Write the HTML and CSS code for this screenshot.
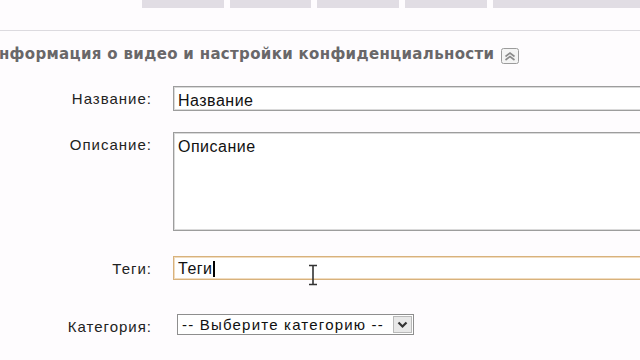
FILE: index.html
```html
<!DOCTYPE html>
<html lang="ru">
<head>
<meta charset="utf-8">
<title>Информация о видео</title>
<link rel="stylesheet" href="styles.css">
</head>
<body>
<div class="page">
  <div class="tabs">
    <span class="tab"></span>
    <span class="tab"></span>
    <span class="tab"></span>
    <span class="tab"></span>
    <span class="tab tab-last"></span>
  </div>
  <div class="rule"></div>

  <h2 class="section-title">Информация о видео и настройки конфиденциальности
    <span class="collapse"><svg width="18" height="16" viewBox="0 0 18 16"><rect x="0.5" y="0.5" width="17" height="15" rx="2" fill="#f4f4f4" stroke="#9c9c9c"/><path d="M4.5 8.5 L9 5 L13.5 8.5 M4.5 12 L9 8.5 L13.5 12" fill="none" stroke="#8a8a8a" stroke-width="1.6"/></svg></span>
  </h2>

  <div class="form">
    <label class="label">Название:</label>
    <div class="field field-title">Название</div>

    <label class="label">Описание:</label>
    <div class="field field-desc">Описание</div>

    <label class="label">Теги:</label>
    <div class="field field-tags">Теги<span class="caret"></span>
      <svg class="ibeam" width="12" height="22" viewBox="0 0 12 22"><path d="M2 1.5 H10 M6 1.5 V20.5 M2 20.5 H10" fill="none" stroke="#333" stroke-width="1.6"/></svg>
    </div>

    <label class="label">Категория:</label>
    <div class="select">
      <span class="select-text">-- Выберите категорию --</span>
      <span class="select-btn"><svg width="11" height="8" viewBox="0 0 11 8"><path d="M1.5 1.5 L5.5 5.5 L9.5 1.5" fill="none" stroke="#333" stroke-width="2.2"/></svg></span>
    </div>
  </div>
</div>
</body>
</html>
```

FILE: styles.css
```css
/* upload form: video info block */

body
{ margin: 0;
  background-color: #fefcfe;
  overflow: hidden;
}

div.page
{ width: 640px;
  height: 360px;
  overflow: hidden;
}

div.tabs
{ display: flex;
  gap: 6px;
  padding-left: 142px;
  height: 8px;
}

span.tab
{ width: 83px;
  height: 8px;
  background-color: #e1dde4;
}

span.tab-last
{ width: 150px;
}

div.rule
{ margin-top: 22px;
  height: 1px;
  border-top: 1px solid #dcdadf;
}

h2.section-title
{ margin: 12px 0 0 -14px;
  display: flex;
  align-items: center;
  gap: 7px;
  font-family: "DejaVu Sans", Verdana, sans-serif;
  font-size: 15px;
  font-weight: bold;
  letter-spacing: 0.33px;
  color: #696769;
  white-space: nowrap;
  height: 20px;
}

span.collapse
{ display: flex;
  padding-top: 3px;
}

div.form
{ margin-top: 22px;
  display: grid;
  grid-template-columns: 152px 500px;
  column-gap: 21px;
  font-family: "Liberation Sans", Arial, sans-serif;
}

label.label
{ text-align: right;
  font-size: 15px;
  letter-spacing: 1px;
  color: #222;
  padding-top: 4px;
}

div.field
{ box-sizing: border-box;
  border: 1px solid #9d9d9d;
  box-shadow: inset 0 0 0 1px #dadada;
  background-color: #fff;
  font-size: 16px;
  letter-spacing: 0.5px;
  color: #111;
  padding: 3px 4px;
}

div.field-title
{ height: 25px;
  margin-bottom: 21px;
  padding-top: 5px;
}

div.field-desc
{ height: 99px;
  margin-bottom: 25px;
  padding-top: 5px;
}

div.field-tags
{ position: relative;
  height: 24px;
  margin-bottom: 34px;
  border-color: #d8b27c;
  box-shadow: inset 0 0 0 1px #f1dcc0;
}

span.caret
{ display: inline-block;
  width: 2px;
  height: 16px;
  margin-left: 0;
  vertical-align: -3px;
  background-color: #000;
}

svg.ibeam
{ position: absolute;
  left: 133px;
  top: 7px;
}

div.select
{ box-sizing: border-box;
  display: flex;
  width: 237px;
  height: 21px;
  margin-left: 4px;
  border: 1px solid #8e8e8e;
  background-color: #fff;
  font-size: 15px;
  letter-spacing: 1.2px;
  color: #111;
}

span.select-text
{ flex: 1;
  padding: 1px 0 0 4px;
  white-space: nowrap;
}

span.select-btn
{ display: flex;
  align-items: center;
  justify-content: center;
  width: 17px;
  margin: 1px;
  border: 1px solid #b9b9b9;
  background-color: #e8e8e8;
}
```
